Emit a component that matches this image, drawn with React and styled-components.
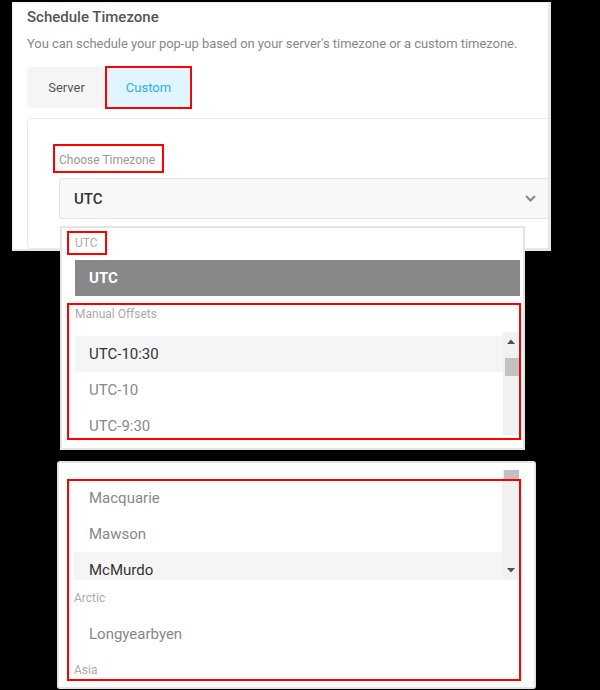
import React from "react";
import styled, { createGlobalStyle } from "styled-components";

const Global = createGlobalStyle`
  html, body { margin: 0; padding: 0; background: #000; }
  body { font-family: Roboto, "Liberation Sans", sans-serif; }
  * { box-sizing: border-box; }
`;

const Stage = styled.div`
  width: 600px;
  height: 690px;
  overflow: hidden;
  background: #000;
  display: flex;
  flex-direction: column;
  align-items: flex-start;
`;

const PanelWrap = styled.div`
  position: relative;
  margin: 2px 0 0 12px;
  width: 539px;
  height: 249px;
`;

const Panel = styled.section`
  width: 100%;
  height: 100%;
  background: #fff;
  border-left: 1px solid #ededed;
  border-top: 1px solid #ededed;
  border-right: 3px solid #e6e6e6;
  border-bottom: 2px solid #e6e6e6;
  overflow: hidden;
  padding: 4px 0 0 14px;
  display: flex;
  flex-direction: column;
  align-items: flex-start;
`;

const Title = styled.h3`
  margin: 0;
  font-size: 15px;
  line-height: 20px;
  font-weight: 500;
  color: #555;
`;

const Desc = styled.p`
  margin: 8px 0 0;
  font-size: 13px;
  line-height: 18px;
  letter-spacing: -0.05px;
  color: #888;
`;

const Tabs = styled.div`
  margin-top: 14px;
  display: flex;
  height: 41px;
  background: #f5f5f5;
  border-radius: 4px;
`;

const Tab = styled.div`
  width: ${(p) => p.$w}px;
  display: flex;
  align-items: center;
  justify-content: center;
  font-size: 13px;
  color: ${(p) => (p.$active ? "#29b2ee" : "#555")};
  background: ${(p) => (p.$active ? "#e1f5fe" : "transparent")};
  outline: ${(p) => (p.$active ? "2px solid #f00" : "none")};
  outline-offset: -1px;
`;

const Box = styled.div`
  margin-top: 10px;
  align-self: stretch;
  margin-right: -30px;
  flex: 1;
  border: 1px solid #ebebeb;
  border-radius: 4px;
  padding: 25px 0 0 25px;
  display: flex;
  flex-direction: column;
  align-items: flex-start;
`;

const FieldLabel = styled.label`
  height: 29px;
  line-height: 33px;
  padding: 0 9px 0 6px;
  font-size: 12px;
  color: #999;
  outline: 2px solid #f00;
  outline-offset: -2px;
`;

const Select = styled.div`
  margin: 5px 0 0 6px;
  width: 500px;
  height: 41px;
  background: #f8f8f8;
  border: 1px solid #e3e3e3;
  border-radius: 3px;
  display: flex;
  align-items: center;
  justify-content: space-between;
  padding: 0 22px 0 14px;
  font-size: 15px;
  font-weight: 500;
  color: #333;
`;

const Dropdown = styled.div`
  background: #fff;
  border: 2px solid #e4e4e4;
  border-radius: ${(p) => p.$r || 0}px;
  width: ${(p) => p.$w}px;
  height: ${(p) => p.$h}px;
  display: flex;
  flex-direction: column;
  align-items: flex-start;
  overflow: hidden;
`;

const FloatingMenu = styled(Dropdown)`
  position: absolute;
  left: 48px;
  top: 224px;
  z-index: 2;
`;

const SecondMenu = styled(Dropdown)`
  position: relative;
  margin: 210px 0 0 57px;
`;

const Annot = styled.div`
  position: absolute;
  left: ${(p) => p.$x}px;
  top: ${(p) => p.$y}px;
  width: ${(p) => p.$w}px;
  height: ${(p) => p.$h}px;
  border: 2px solid #f00;
  pointer-events: none;
  z-index: 3;
`;

const GroupTag = styled.div`
  margin: 3px 0 0 5px;
  height: 24px;
  line-height: 24px;
  padding: 0 9px 0 8px;
  font-size: 12px;
  color: #aaa;
  outline: 2px solid #f00;
  outline-offset: -2px;
`;

const GroupLabel = styled.div`
  margin-left: ${(p) => p.$ml}px;
  height: 36px;
  line-height: 36px;
  font-size: 12px;
  color: #aaa;
  flex-shrink: 0;
`;

const Option = styled.div`
  height: 36px;
  line-height: 36px;
  flex-shrink: 0;
  padding-left: ${(p) => p.$pl || 15}px;
  font-size: 15px;
  font-weight: 400;
  color: ${(p) => (p.$hover ? "#333" : "#888")};
  background: ${(p) => (p.$hover ? "#f5f5f5" : "transparent")};
`;

const SelectedOption = styled(Option)`
  margin: 5px 3px 0 13px;
  align-self: stretch;
  background: #888;
  color: #fff;
  font-weight: 700;
`;

const StandaloneOption = styled(Option)`
  margin-left: ${(p) => p.$ml}px;
  align-self: stretch;
`;

const ScrollArea = styled.div`
  margin: ${(p) => p.$mt}px 0 0 ${(p) => p.$ml}px;
  width: ${(p) => p.$w}px;
  height: ${(p) => p.$h}px;
  display: flex;
  flex-shrink: 0;
`;

const ListBody = styled.div`
  flex: 1;
  overflow: hidden;
  padding-top: ${(p) => p.$pt}px;
  display: flex;
  flex-direction: column;
`;

const Track = styled.div`
  width: ${(p) => p.$w}px;
  background: #f1f1f1;
  display: flex;
  flex-direction: column;
  align-items: center;
  padding: ${(p) => p.$pad};
`;

const Thumb = styled.div`
  align-self: stretch;
  margin: 0 0 0 2px;
  height: ${(p) => p.$h}px;
  background: #c1c1c1;
`;

const ArrowBox = styled.div`
  height: ${(p) => p.$h}px;
  display: flex;
  align-items: center;
  justify-content: center;
`;

const Gap = styled.div`
  height: ${(p) => p.$h}px;
`;

const Spacer = styled.div`
  flex: 1;
`;

const Tri = ({ down }) => (
  <svg width="8" height="5" viewBox="0 0 8 5">
    <path d={down ? "M0 0 L8 0 L4 4.5 Z" : "M0 5 L8 5 L4 0.5 Z"} fill="#505050" />
  </svg>
);

const Chevron = () => (
  <svg width="11" height="7" viewBox="0 0 11 7">
    <path d="M1 1 L5.5 5.5 L10 1" fill="none" stroke="#888" strokeWidth="2" />
  </svg>
);

export default function App() {
  return (
    <Stage>
      <Global />
      <PanelWrap>
        <Panel>
          <Title>Schedule Timezone</Title>
          <Desc>You can schedule your pop-up based on your server's timezone or a custom timezone.</Desc>
          <Tabs>
            <Tab $w={79}>Server</Tab>
            <Tab $w={85} $active>Custom</Tab>
          </Tabs>
          <Box>
            <FieldLabel>Choose Timezone</FieldLabel>
            <Select>
              <span>UTC</span>
              <Chevron />
            </Select>
          </Box>
        </Panel>
        <FloatingMenu $w={465} $h={224}>
          <GroupTag>UTC</GroupTag>
          <SelectedOption $pl={14}>UTC</SelectedOption>
          <GroupLabel $ml={13}>Manual Offsets</GroupLabel>
          <ScrollArea $mt={0} $ml={13} $w={444} $h={103}>
            <ListBody $pt={4}>
              <Option $pl={14} $hover>UTC-10:30</Option>
              <Option $pl={14}>UTC-10</Option>
              <Option $pl={14}>UTC-9:30</Option>
            </ListBody>
            <Track $w={16} $pad="0">
              <ArrowBox $h={18}><Tri /></ArrowBox>
              <Gap $h={8} />
              <Thumb $h={18} />
            </Track>
          </ScrollArea>
          <Annot $x={5} $y={75} $w={454} $h={137} />
        </FloatingMenu>
      </PanelWrap>

      <SecondMenu $w={479} $h={228} $r={3}>
        <ScrollArea $mt={7} $ml={15} $w={445} $h={110}>
          <ListBody $pt={10}>
            <Option>Macquarie</Option>
            <Option>Mawson</Option>
            <Option $hover>McMurdo</Option>
          </ListBody>
          <Track $w={17} $pad="0 0 2px">
            <Thumb $h={9} />
            <Spacer />
            <ArrowBox $h={16}><Tri down /></ArrowBox>
          </Track>
        </ScrollArea>
        <GroupLabel $ml={15}>Arctic</GroupLabel>
        <StandaloneOption $ml={15}>Longyearbyen</StandaloneOption>
        <GroupLabel $ml={15}>Asia</GroupLabel>
        <Annot $x={8} $y={16} $w={454} $h={202} />
      </SecondMenu>
    </Stage>
  );
}
